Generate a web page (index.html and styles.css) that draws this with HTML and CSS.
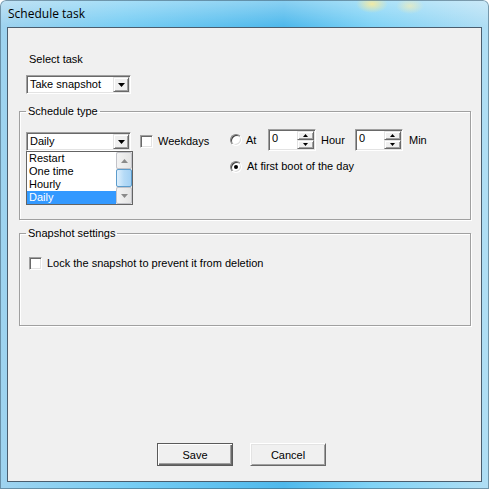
FILE: index.html
```html
<!DOCTYPE html>
<html lang="en">
<head>
    <meta charset="UTF-8">
    <title>Schedule task</title>
    <link rel="stylesheet" href="styles.css">
</head>
<body>
    <div class="window">
        <div class="titlebar">Schedule task</div>
        <div class="client">
            <div class="select-task">
                <div class="label">Select task</div>
                <div class="combo">
                    <span class="combo-text">Take snapshot</span>
                    <span class="combo-btn"><svg width="7" height="4" viewBox="0 0 7 4"><path d="M0 0h7L3.5 4z" fill="#000"/></svg></span>
                </div>
            </div>

            <fieldset class="group group-schedule">
                <legend>Schedule type</legend>
                <div class="schedule-row">
                    <div class="combo-wrap">
                        <div class="combo">
                            <span class="combo-text">Daily</span>
                            <span class="combo-btn"><svg width="7" height="4" viewBox="0 0 7 4"><path d="M0 0h7L3.5 4z" fill="#000"/></svg></span>
                        </div>
                        <div class="dropdown">
                            <div class="dropdown-items">
                                <div class="item">Restart</div>
                                <div class="item">One time</div>
                                <div class="item">Hourly</div>
                                <div class="item selected">Daily</div>
                            </div>
                            <div class="vscroll">
                                <div class="sb-btn"><svg width="7" height="4" viewBox="0 0 7 4"><path d="M0 4h7L3.5 0z" fill="#8a8a8a"/></svg></div>
                                <div class="sb-thumb"></div>
                                <div class="sb-btn"><svg width="7" height="4" viewBox="0 0 7 4"><path d="M0 0h7L3.5 4z" fill="#8a8a8a"/></svg></div>
                            </div>
                        </div>
                    </div>

                    <label class="check weekdays"><span class="checkbox"></span>Weekdays</label>

                    <div class="time-opts">
                        <div class="time-row">
                            <span class="radio"></span>
                            <span class="at-label">At</span>
                            <div class="spin">
                                <span class="spin-text">0</span>
                                <span class="spin-btns">
                                    <span class="spin-btn"><svg width="5" height="3" viewBox="0 0 5 3"><path d="M0 3h5L2.5 0z" fill="#000"/></svg></span>
                                    <span class="spin-btn"><svg width="5" height="3" viewBox="0 0 5 3"><path d="M0 0h5L2.5 3z" fill="#000"/></svg></span>
                                </span>
                            </div>
                            <span class="hour-label">Hour</span>
                            <div class="spin">
                                <span class="spin-text">0</span>
                                <span class="spin-btns">
                                    <span class="spin-btn"><svg width="5" height="3" viewBox="0 0 5 3"><path d="M0 3h5L2.5 0z" fill="#000"/></svg></span>
                                    <span class="spin-btn"><svg width="5" height="3" viewBox="0 0 5 3"><path d="M0 0h5L2.5 3z" fill="#000"/></svg></span>
                                </span>
                            </div>
                            <span class="min-label">Min</span>
                        </div>
                        <div class="time-row boot-row">
                            <span class="radio checked"></span>
                            <span class="boot-label">At first boot of the day</span>
                        </div>
                    </div>
                </div>
            </fieldset>

            <fieldset class="group group-snapshot">
                <legend>Snapshot settings</legend>
                <label class="check lock"><span class="checkbox"></span>Lock the snapshot to prevent it from deletion</label>
            </fieldset>

            <div class="buttons">
                <button class="btn btn-default">Save</button>
                <button class="btn">Cancel</button>
            </div>
        </div>
    </div>
</body>
</html>
```

FILE: styles.css
```css
body {
    margin: 0;
    background: #ffffff;
    font-family: "Liberation Sans", Arial, sans-serif;
    font-size: 11px;
    color: #000000;
}
.window {
    width: 489px;
    height: 489px;
    box-sizing: border-box;
    padding: 0 7px 7px 7px;
    display: flex;
    flex-direction: column;
    border-radius: 6px 6px 0 0;
    background:
        radial-gradient(ellipse 16px 9px at 372px 4px, rgba(255, 236, 150, 0.85), rgba(255, 236, 150, 0)),
        radial-gradient(ellipse 14px 8px at 410px 6px, rgba(255, 240, 170, 0.6), rgba(255, 240, 170, 0)),
        linear-gradient(to bottom, rgba(255, 255, 255, 0.35), rgba(255, 255, 255, 0) 26px),
        linear-gradient(to right, #9fd3ef 0%, #79cef4 25%, #4fb9ec 58%, #80d3f6 76%, #b0def4 100%);
    box-shadow: inset 0 0 0 1px rgba(60, 90, 110, 0.55);
}
.titlebar {
    height: 27px;
    line-height: 27px;
    padding-left: 1px;
    font-family: "Open Sans", "Liberation Sans", sans-serif;
    font-size: 12px;
    color: #000000;
}
.client {
    flex: 1;
    background: #f0f0f0;
    border: 1px solid #4a5d6e;
    display: flex;
    flex-direction: column;
    padding: 25px 10px 15px 11px;
}
.select-task {
    padding-left: 7px;
}
.label {
    height: 13px;
    line-height: 13px;
    margin-left: 3px;
}
.combo {
    width: 105px;
    height: 19px;
    box-sizing: border-box;
    background: #ffffff;
    border: 1px solid;
    border-color: #a0a0a0 #ffffff #ffffff #a0a0a0;
    box-shadow: inset 1px 1px 0 #696969, inset -1px -1px 0 #e3e3e3;
    display: flex;
    align-items: stretch;
    padding: 1px;
}
.select-task .combo {
    margin-top: 9px;
}
.combo-text {
    flex: 1;
    line-height: 15px;
    padding-left: 2px;
}
.combo-btn {
    width: 16px;
    box-sizing: border-box;
    background: #f0f0f0;
    border: 1px solid;
    border-color: #e3e3e3 #696969 #696969 #e3e3e3;
    box-shadow: inset 1px 1px 0 #ffffff, inset -1px -1px 0 #a0a0a0;
    display: flex;
    align-items: center;
    justify-content: center;
}
.group {
    margin: 0;
    padding: 0 6px;
    border: 1px solid #a0a0a0;
    box-shadow: inset 1px 1px 0 #ffffff, 1px 1px 0 #ffffff;
    box-sizing: border-box;
}
.group legend {
    padding: 0 2px;
    line-height: 13px;
}
.group-schedule {
    margin-top: 11px;
    height: 115px;
    padding-top: 14px;
}
.group-snapshot {
    margin-top: 7px;
    height: 99px;
    padding: 17px 9px 0;
}
.group-snapshot legend {
    margin-left: -3px;
}
.schedule-row {
    display: flex;
    align-items: flex-start;
}
.combo-wrap {
    position: relative;
}
.dropdown {
    position: absolute;
    top: 19px;
    left: 0;
    width: 107px;
    height: 54px;
    box-sizing: border-box;
    border: 1px solid #646464;
    background: #ffffff;
    display: flex;
    z-index: 2;
}
.dropdown-items {
    flex: 1;
}
.item {
    height: 13px;
    line-height: 13px;
    padding-left: 2px;
}
.item.selected {
    background: #3399ff;
    color: #ffffff;
}
.vscroll {
    width: 16px;
    display: flex;
    flex-direction: column;
    background: #eaeaea;
}
.sb-btn {
    height: 17px;
    box-sizing: border-box;
    border: 1px solid #c2c3c9;
    border-radius: 2px;
    background: linear-gradient(to right, #f3f3f3, #e4e4e4);
    display: flex;
    align-items: center;
    justify-content: center;
}
.sb-thumb {
    height: 18px;
    box-sizing: border-box;
    border: 1px solid #5c9ccc;
    border-radius: 2px;
    background: linear-gradient(to right, #dff0fd, #b6dbf7 50%, #a4d1f4);
}
.check {
    display: flex;
    align-items: center;
    line-height: 13px;
}
.checkbox {
    width: 13px;
    height: 13px;
    box-sizing: border-box;
    background: #ffffff;
    border: 1px solid;
    border-color: #a0a0a0 #ffffff #ffffff #a0a0a0;
    box-shadow: inset 1px 1px 0 #696969, inset -1px -1px 0 #e3e3e3;
    margin-right: 5px;
}
.weekdays {
    margin-left: 9px;
    margin-top: 3px;
    width: 90px;
}
.time-opts {
    margin-top: -3px;
}
.time-row {
    display: flex;
    align-items: center;
}
.radio {
    width: 12px;
    height: 12px;
    box-sizing: border-box;
    border-radius: 50%;
    background: #ffffff;
    border: 1px solid;
    border-color: #808080 #ffffff #ffffff #808080;
    box-shadow: inset 1px 1px 0 #404040, inset -1px -1px 0 #dcdcdc;
    display: flex;
    align-items: center;
    justify-content: center;
}
.radio.checked::after {
    content: "";
    width: 4px;
    height: 4px;
    border-radius: 50%;
    background: #000000;
}
.at-label {
    margin-left: 4px;
    width: 22px;
}
.spin {
    width: 48px;
    height: 22px;
    box-sizing: border-box;
    background: #ffffff;
    border: 1px solid;
    border-color: #a0a0a0 #ffffff #ffffff #a0a0a0;
    box-shadow: inset 1px 1px 0 #696969, inset -1px -1px 0 #e3e3e3;
    padding: 1px;
    display: flex;
}
.spin-text {
    flex: 1;
    padding-left: 2px;
    line-height: 15px;
}
.spin-btns {
    width: 17px;
    display: flex;
    flex-direction: column;
}
.spin-btn {
    flex: 1;
    box-sizing: border-box;
    background: #f0f0f0;
    border: 1px solid;
    border-color: #e3e3e3 #696969 #696969 #e3e3e3;
    box-shadow: inset 1px 1px 0 #ffffff, inset -1px -1px 0 #a0a0a0;
    display: flex;
    align-items: center;
    justify-content: center;
}
.hour-label {
    margin-left: 5px;
    width: 34px;
}
.min-label {
    margin-left: 6px;
}
.boot-row {
    margin-top: 9px;
    line-height: 13px;
}
.boot-label {
    margin-left: 5px;
}
.buttons {
    margin-top: auto;
    display: flex;
    gap: 17px;
    padding-left: 138px;
}
.btn {
    width: 76px;
    height: 23px;
    box-sizing: border-box;
    font-family: "Liberation Sans", Arial, sans-serif;
    font-size: 11px;
    color: #000000;
    background: #f0f0f0;
    border: 1px solid;
    border-color: #ffffff #696969 #696969 #ffffff;
    box-shadow: inset 1px 1px 0 #e3e3e3, inset -1px -1px 0 #a0a0a0;
    padding: 0;
}
.btn-default {
    border: 1px solid #5a5a5a;
    box-shadow: inset 1px 1px 0 #ffffff, inset -1px -1px 0 #696969, inset -2px -2px 0 #a0a0a0;
}
```
